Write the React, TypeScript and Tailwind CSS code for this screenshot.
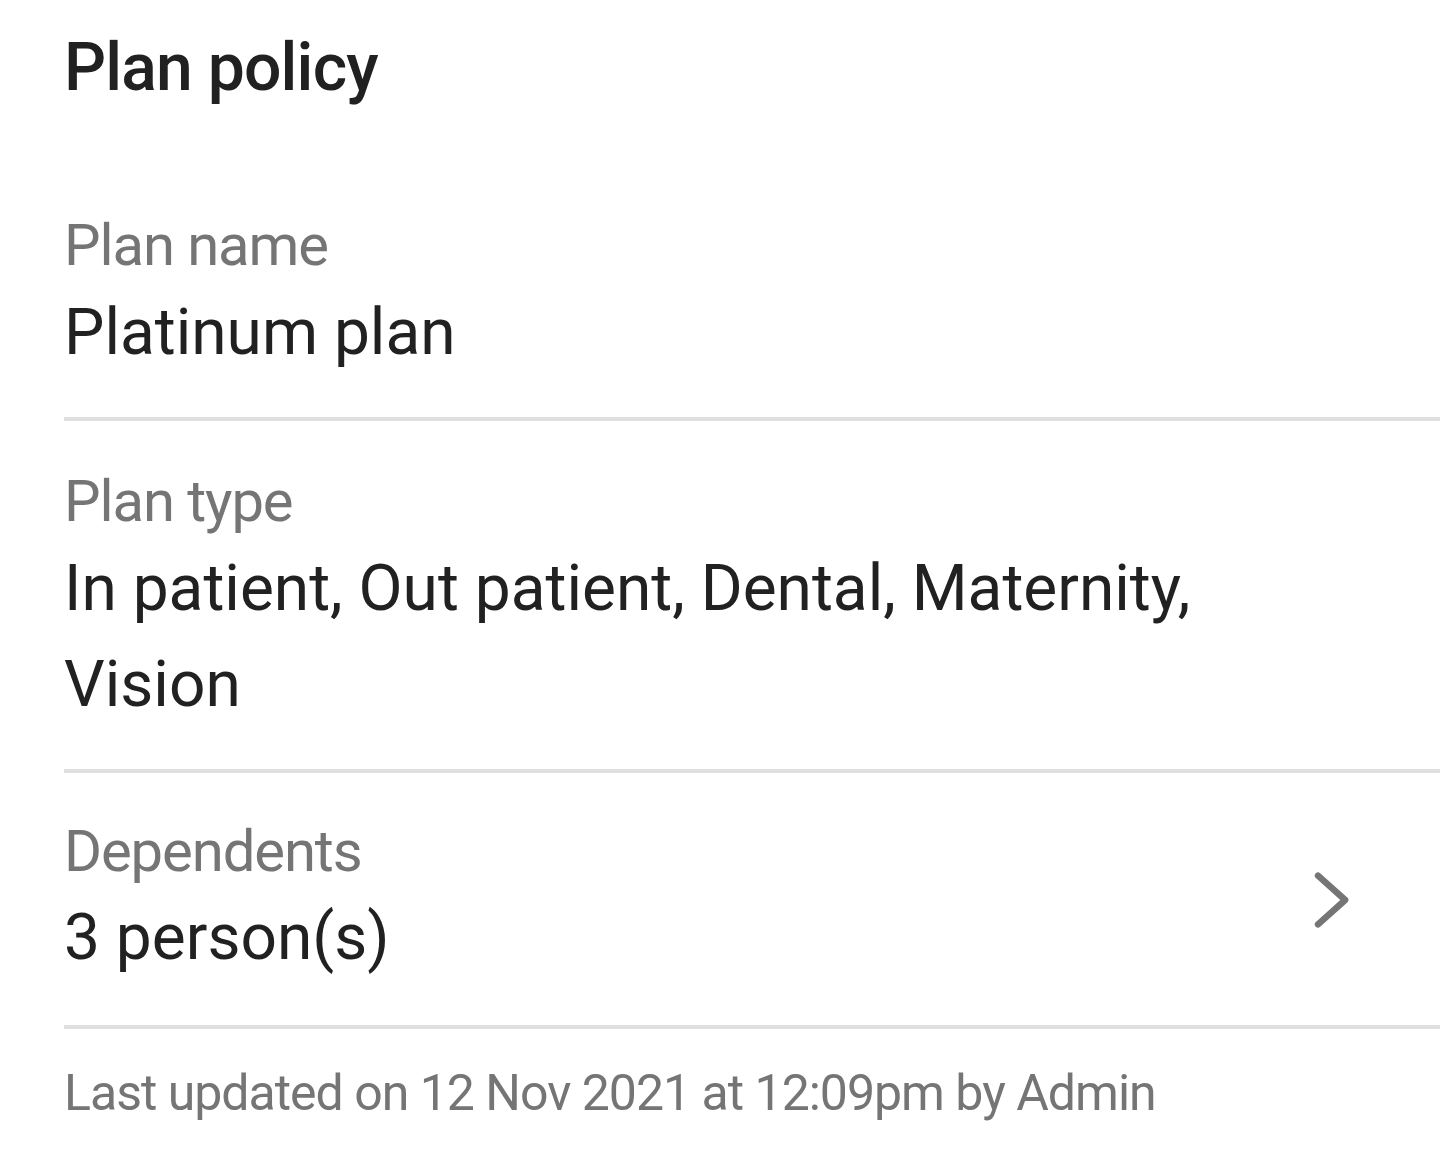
export default function App() {
  return (
    <div className="min-h-screen bg-white font-['Roboto',sans-serif] text-[#212121]">
      <div className="pt-[28px] pb-[57px] pl-16">
        <h1 className="text-[66px] leading-[80px] font-medium tracking-[-0.8px]">Plan policy</h1>
      </div>

      <div className="ml-16 pr-[128px] pt-10 pb-9 border-b-4 border-[#e0e0e0]">
        <div className="text-[58px] leading-[80px] tracking-[-1.1px] text-[#757575]">Plan name</div>
        <div className="text-[64px] leading-[96px]">Platinum plan</div>
      </div>

      <div className="ml-16 pr-[128px] pt-10 pb-9 border-b-4 border-[#e0e0e0]">
        <div className="text-[58px] leading-[80px] tracking-[-1.1px] text-[#757575]">Plan type</div>
        <div className="text-[64px] leading-[96px]">
          In patient, Out patient, Dental, Maternity, Vision
        </div>
      </div>

      <div className="ml-16 pr-16 pt-10 pb-[39px] border-b-4 border-[#e0e0e0] flex items-center justify-between">
        <div>
          <div className="text-[58px] leading-[77px] tracking-[-1.1px] text-[#757575]">Dependents</div>
          <div className="text-[64px] leading-[96px]">3 person(s)</div>
        </div>
        <svg width="96" height="96" viewBox="0 0 24 24" fill="none" stroke="#757575" strokeWidth="1.6" strokeLinecap="round" strokeLinejoin="round">
          <polyline points="9.5 5.9 16.3 12 9.5 18.1" />
        </svg>
      </div>

      <div className="pl-16 pt-[28px] text-[50px] leading-[72px] tracking-[-1px] text-[#757575]">
        Last updated on 12 Nov 2021 at 12:09pm by Admin
      </div>
    </div>
  );
}
